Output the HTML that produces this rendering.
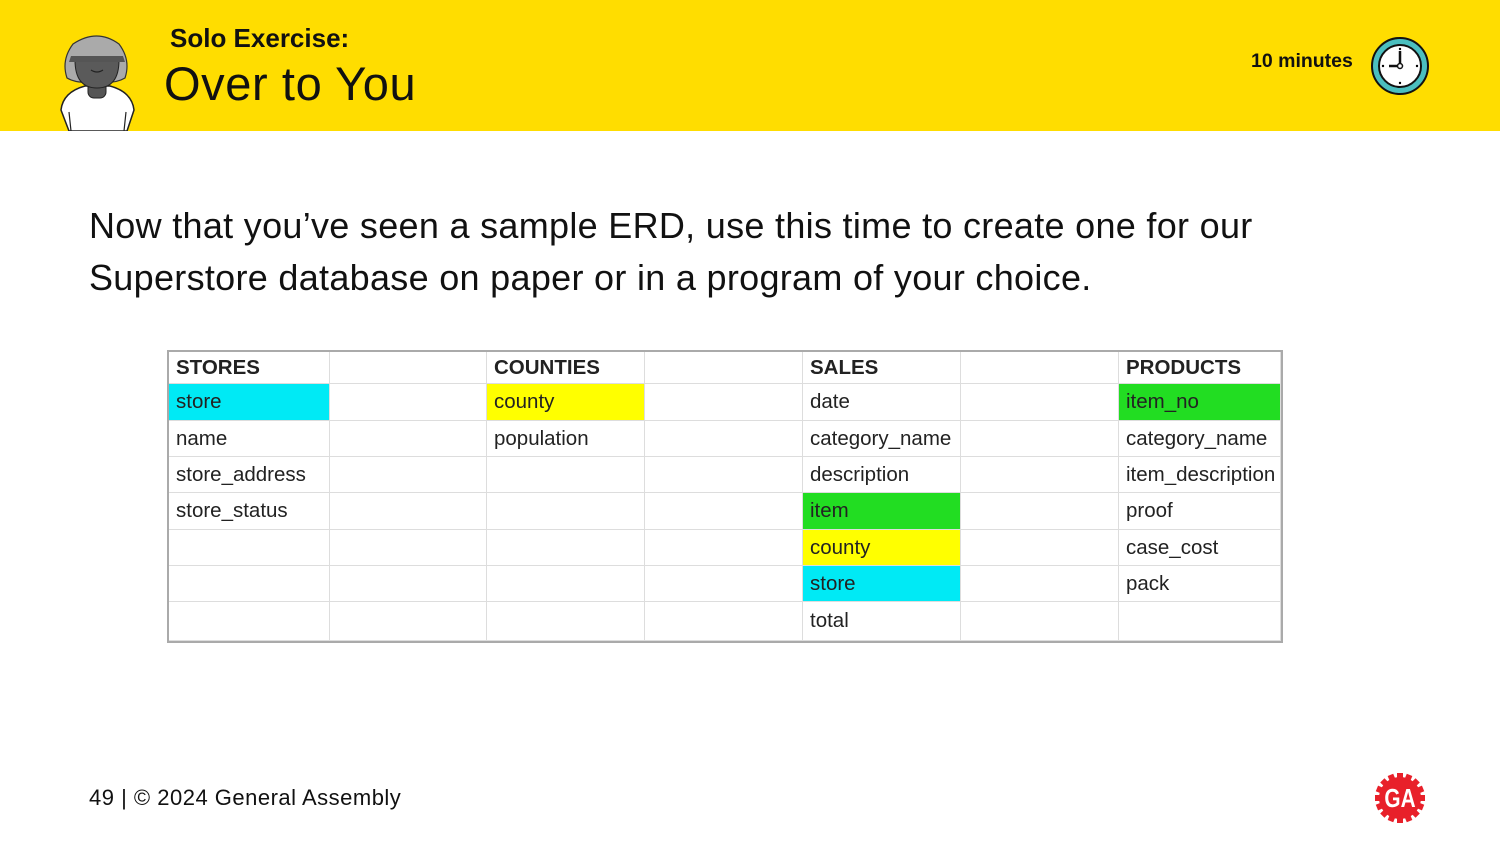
<!DOCTYPE html>
<html><head><meta charset="utf-8"><style>
body{margin:0;width:1500px;height:844px;background:#fff;position:relative;overflow:hidden;font-family:"Liberation Sans",sans-serif}
.hdr{position:absolute;left:0;top:0;width:1500px;height:131px;background:#ffdd00}
.t{position:absolute;color:#111}
.cell{position:absolute;box-sizing:border-box;border-right:1px solid #ddd;border-bottom:1px solid #ddd;font-size:20.5px;color:#222;padding-left:7px;display:flex;align-items:center}
</style></head><body>
<div class="hdr"></div>
<svg style="position:absolute;left:55px;top:30px" width="85" height="101" viewBox="0 0 85 101">
<path d="M14 101 L6 80 Q8 62 30 56 L55 56 Q77 62 79 80 L72 101 Z" fill="#fff" stroke="#222" stroke-width="1.5"/>
<path d="M16 101 L14 82 M69 101 L71 82" stroke="#222" stroke-width="1.2"/>
<path d="M12 48 Q6 30 18 14 Q42 -2 64 14 Q76 30 70 48 Q60 54 42 52 Q22 54 12 48Z" fill="#aaa" stroke="#333" stroke-width="1.2"/>
<rect x="33" y="48" width="18" height="20" rx="6" fill="#555" stroke="#222"/>
<path d="M20 30 Q20 58 42 58 Q64 58 64 30 Q42 24 20 30Z" fill="#5a5a5a" stroke="#222"/>
<path d="M16 26 L68 26 L70 32 L14 32Z" fill="#555"/>
<path d="M36 40 Q42 44 48 40" stroke="#222" fill="none" stroke-width="1.2"/>
</svg>
<div class="t" style="left:170px;top:23px;font-size:26px;font-weight:bold">Solo Exercise:</div>
<div class="t" style="left:164px;top:56px;font-size:47px;letter-spacing:0.6px">Over to You</div>
<div class="t" style="left:1251px;top:50px;font-size:19.5px;font-weight:bold">10 minutes</div>
<svg style="position:absolute;left:1370px;top:36px" width="60" height="60" viewBox="0 0 60 60">
<circle cx="30" cy="30" r="28" fill="#4bbfbf" stroke="#111" stroke-width="2"/>
<circle cx="30" cy="30" r="21" fill="#fff" stroke="#111" stroke-width="2"/>
<path d="M30 15V30H19" stroke="#111" stroke-width="2.5" fill="none"/>
<circle cx="30" cy="30" r="2.5" fill="#fff" stroke="#111" stroke-width="1.5"/>
<circle cx="30" cy="13" r="1.2"/><circle cx="30" cy="47" r="1.2"/><circle cx="13" cy="30" r="1.2"/><circle cx="47" cy="30" r="1.2"/>
</svg>
<div class="t" style="left:89px;top:200px;font-size:36px;line-height:52px;letter-spacing:0.3px;color:#111">Now that you’ve seen a sample ERD, use this time to create one for our<br>Superstore database on paper or in a program of your choice.</div>
<div style="position:absolute;left:167px;top:350px;width:1116px;height:293px;border:2px solid #aaa;box-sizing:border-box;background:#fff"></div>
<div id="tbl"></div>
<script>
var xs=[169,330,487,645,803,961,1119,1281];
var ys=[352,384,421,457,493,530,566,602,641];
var data=[
["STORES","","COUNTIES","","SALES","","PRODUCTS"],
["store","","county","","date","","item_no"],
["name","","population","","category_name","","category_name"],
["store_address","","","","description","","item_description"],
["store_status","","","","item","","proof"],
["","","","","county","","case_cost"],
["","","","","store","","pack"],
["","","","","total","",""]];
var bg={"1,0":"#00eaf5","1,2":"#ffff00","1,6":"#22dd22","4,4":"#22dd22","5,4":"#ffff00","6,4":"#00eaf5"};
var h="";
for(var r=0;r<8;r++)for(var c=0;c<7;c++){
var b=bg[r+","+c]||"transparent";
h+='<div class="cell" style="left:'+xs[c]+'px;top:'+ys[r]+'px;width:'+(xs[c+1]-xs[c])+'px;height:'+(ys[r+1]-ys[r])+'px;background:'+b+';'+(r==0?'font-weight:bold;':'')+'">'+data[r][c]+'</div>';}
document.getElementById("tbl").innerHTML=h;
</script>
<div class="t" style="left:89px;top:785px;font-size:22px;letter-spacing:0.5px">49 | © 2024 General Assembly</div>
<svg style="position:absolute;left:1374px;top:772px" width="52" height="52" viewBox="-26 -26 52 52">
<g fill="#e8202a"><circle r="21"/>
<g id="tth"><rect x="-3" y="-25" width="6" height="6"/></g>
<use href="#tth" transform="rotate(22.5)"/><use href="#tth" transform="rotate(45)"/><use href="#tth" transform="rotate(67.5)"/><use href="#tth" transform="rotate(90)"/><use href="#tth" transform="rotate(112.5)"/><use href="#tth" transform="rotate(135)"/><use href="#tth" transform="rotate(157.5)"/><use href="#tth" transform="rotate(180)"/><use href="#tth" transform="rotate(202.5)"/><use href="#tth" transform="rotate(225)"/><use href="#tth" transform="rotate(247.5)"/><use href="#tth" transform="rotate(270)"/><use href="#tth" transform="rotate(292.5)"/><use href="#tth" transform="rotate(315)"/><use href="#tth" transform="rotate(337.5)"/></g>
<text x="0" y="9" text-anchor="middle" font-family="Liberation Sans Narrow,Liberation Sans,sans-serif" font-weight="bold" font-size="26" fill="#fff" transform="scale(0.8,1)">GA</text>
</svg>
</body></html>
